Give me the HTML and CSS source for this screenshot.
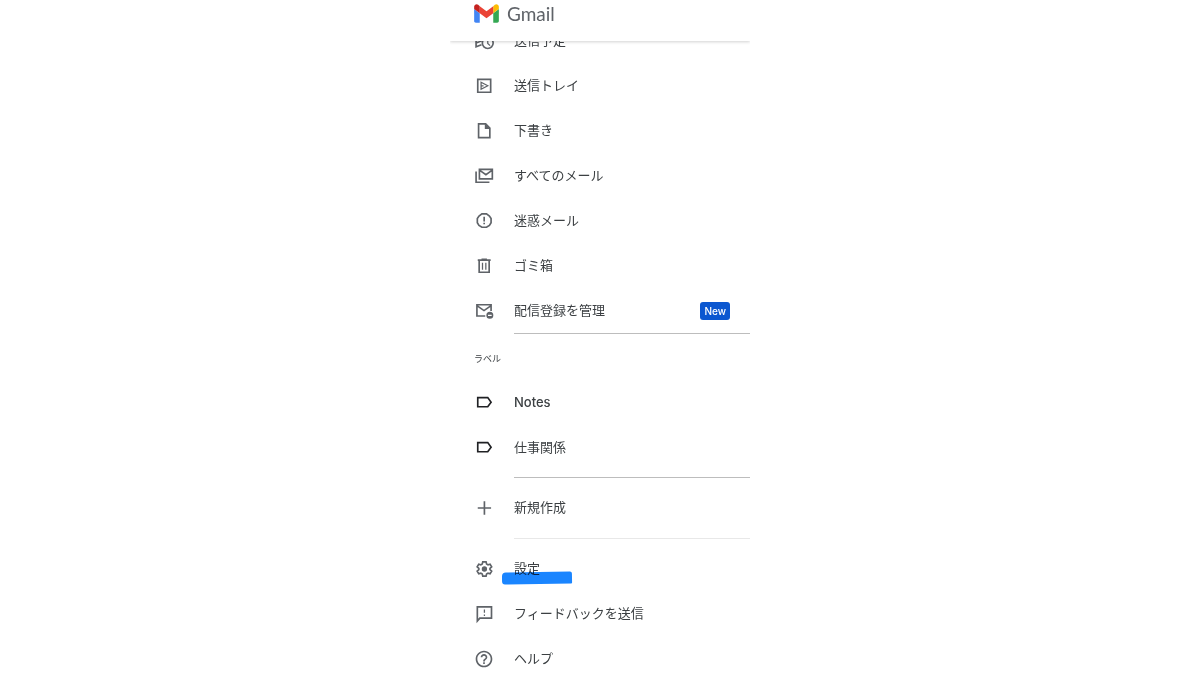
FILE: index.html
```html
<!DOCTYPE html>
<html lang="ja">
<head>
    <meta charset="UTF-8">
    <meta name="viewport" content="width=device-width, initial-scale=1.0">
    <title>Gmail</title>
    <link rel="stylesheet" href="styles.css">
</head>
<body>
    <div class="drawer">
        <header class="header">
            <svg class="logo" viewBox="0 0 52 40">
                <path fill="#4285f4" d="M3.6 39.5h8.2v-20L0 10.7V36c0 2 1.600 3.500 3.600 3.500"/>
                <path fill="#34a853" d="M40.200 39.500h8.200c2 0 3.600-1.600 3.600-3.500V10.700l-11.800 8.800"/>
                <path fill="#fbbc04" d="M40.200 4.500v15L52 10.700V6c0-4.400-5-6.900-8.500-4.200"/>
                <path fill="#ea4335" d="M11.800 19.500v-15L26 15.100 40.200 4.500v15L26 30.200"/>
                <path fill="#c5221f" d="M0 6v4.700l11.800 8.800v-15L8.500 1.800C5-.9 0 1.600 0 6"/>
            </svg>
            <span class="brand">Gmail</span>
        </header>

        <nav class="menu">
            <a class="item" href="#">
                <svg class="icon" viewBox="0 0 24 24"><g class="line"><path d="M9 16.500L2.500 19V4l15 6M2.500 9.500l6 2.500-6 2.500"/><circle cx="16.500" cy="14.500" r="6.500"/><path class="thin" d="M16.500 10.500V15l2.800 2.600"/></g></svg>
                <span class="text">送信予定</span>
            </a>
            <a class="item" href="#">
                <svg class="icon" viewBox="0 0 24 24"><g class="line"><path d="M4.500 4h15.500v15.500H4.500z"/><path class="thin" d="M8.500 7.500l8 4.200-8 4.200zM8.500 11.700h3"/></g></svg>
                <span class="text">送信トレイ</span>
            </a>
            <a class="item" href="#">
                <svg class="icon" viewBox="0 0 24 24"><g class="line"><path d="M5.500 3.500h8.500l5 5v11.500H5.500z"/></g><path d="M13 3v6.500h6.500z"/></svg>
                <span class="text">下書き</span>
            </a>
            <a class="item" href="#">
                <svg class="icon" viewBox="0 0 24 24"><g class="line"><path d="M6.500 4h15.500v11.500H6.500zM6.500 5l7.800 5.500 7.700-5.500M2.500 6.500v13H18.500"/></g></svg>
                <span class="text">すべてのメール</span>
            </a>
            <a class="item" href="#">
                <svg class="icon" viewBox="0 0 24 24"><g class="line"><path d="M9.500 3.500h5.500L18.500 6l2 3v5l-2 3.200-3.500 2.300H9.500L6 17.200 4 14V9l2-3zM12.200 7v5.500M12.200 14v2"/></g></svg>
                <span class="text">迷惑メール</span>
            </a>
            <a class="item" href="#">
                <svg class="icon" viewBox="0 0 24 24"><g class="line"><path d="M4.500 5h15.500M9 4h6.500M6.200 5v14.500h12V5"/><path class="thin" d="M10.200 8v8.500M14.200 8v8.500"/></g></svg>
                <span class="text">ゴミ箱</span>
            </a>
            <a class="item" href="#">
                <svg class="icon" viewBox="0 0 24 24"><g class="line"><path d="M13.500 18h-10V4.500H20.500V12M3.500 5.500l8.500 6 8.500-6"/></g><path fill-rule="evenodd" d="M19 13a4.200 4.200 0 1 0 0 8.400 4.200 4.200 0 0 0 0-8.400M16.800 16.500h4.400V18h-4.400z"/></svg>
                <span class="text">配信登録を管理</span>
                <span class="badge">New</span>
            </a>
            <hr class="divider">

            <h2 class="heading">ラベル</h2>
            <a class="item label" href="#">
                <svg class="icon" viewBox="0 0 24 24"><g class="line"><path d="M4.500 5.500h12l4 5.500-4 5.500h-12z"/></g></svg>
                <span class="text strong">Notes</span>
            </a>
            <a class="item label" href="#">
                <svg class="icon" viewBox="0 0 24 24"><g class="line"><path d="M4.500 5.500h12l4 5.500-4 5.500h-12z"/></g></svg>
                <span class="text">仕事関係</span>
            </a>
            <hr class="divider spaced">

            <a class="item" href="#">
                <svg class="icon" viewBox="0 0 24 24"><g class="line"><path d="M12.500 4v16M4.500 12h16"/></g></svg>
                <span class="text">新規作成</span>
            </a>
            <hr class="divider spaced light">

            <a class="item" href="#">
                <svg class="icon" viewBox="0 0 24 24"><g class="line"><path d="M10.500 3.500h4l.6 2.600 1.700 1 2.500-.8 1.900 3.200-2 1.800v1.400l2 1.800-1.900 3.200-2.500-.8-1.700 1-.6 2.600h-4l-.6-2.600-1.700-1-2.500.8-1.900-3.200 2-1.800v-1.400l-2-1.800 1.900-3.200 2.500.8 1.700-1z"/></g><circle cx="12.500" cy="12" r="3.200"/></svg>
                <span class="text marked">設定</span>
            </a>
            <a class="item" href="#">
                <svg class="icon" viewBox="0 0 24 24"><g class="line"><path d="M4 20.500v-17h17v13.500H7z"/><path class="thin" d="M12.500 6.500v4M12.500 12.500v2"/></g></svg>
                <span class="text">フィードバックを送信</span>
            </a>
            <a class="item" href="#">
                <svg class="icon" viewBox="0 0 24 24"><path d="M11 18h2v-2h-2zm1-16C6.480 2 2 6.480 2 12s4.480 10 10 10 10-4.480 10-10S17.520 2 12 2m0 18c-4.410 0-8-3.590-8-8s3.590-8 8-8 8 3.590 8 8-3.590 8-8 8m0-14c-2.210 0-4 1.790-4 4h2c0-1.100.9-2 2-2s2 .9 2 2c0 2-3 1.750-3 5h2c0-2.250 3-2.500 3-5 0-2.210-1.790-4-4-4"/></svg>
                <span class="text">ヘルプ</span>
            </a>
        </nav>
    </div>
</body>
</html>
```

FILE: styles.css
```css
body {
    margin: 0;
    background-color: #fff;
    color: #3c4043;
    font-family: Inter, "Noto Sans CJK JP", sans-serif;
    font-size: 13px;
}
.drawer {
    max-width: 300px;
    height: 100vh;
    margin: 0 auto;
    overflow: hidden;
}
/* the list is scrolled a little way under the header */
.header {
    position: relative;
    z-index: 1;
    display: flex;
    align-items: center;
    gap: 8px;
    box-sizing: border-box;
    height: 41px;
    padding: 0 24px 14px;
    background-color: #fff;
    box-shadow: 0 1px 3px rgba(0, 0, 0, 0.18);
}
.logo {
    width: 25px;
    height: 19px;
}
.brand {
    color: #5f6368;
    font-family: Lato, sans-serif;
    font-size: 19px;
}
.menu {
    margin-top: -23px;
}
.item {
    display: flex;
    align-items: center;
    gap: 20px;
    height: 45px;
    padding: 0 20px 0 24px;
    color: inherit;
    text-decoration: none;
}
.icon {
    flex: none;
    width: 20px;
    height: 20px;
    fill: #5f6368;
}
.line {
    fill: none;
    stroke: #5f6368;
    stroke-width: 2;
}
.thin {
    stroke-width: 1.5;
}
.text {
    padding-bottom: 3px;
}
.strong {
    padding-bottom: 1px;
    font-weight: 500;
}
.label .line {
    stroke: #202124;
}
.badge {
    margin-left: auto;
    padding: 0 4px;
    border-radius: 3px;
    background-color: #0b57d0;
    color: #fff;
    font-size: 10px;
    font-weight: 500;
    line-height: 18px;
}
.divider {
    height: 1px;
    margin: 0 0 0 64px;
    border: 0;
    background-color: #bdbdbd;
}
.spaced {
    margin-top: 7px;
    margin-bottom: 7px;
}
.light {
    margin-top: 8px;
    background-color: #e8e8e8;
}
.heading {
    margin: 0;
    padding: 17px 24px 13px;
    font-size: 9px;
    font-weight: 400;
    line-height: 16px;
}
.marked {
    position: relative;
}
/* marker stroke over the settings entry */
.marked::after {
    content: "";
    position: absolute;
    top: 14px;
    left: -12px;
    width: 70px;
    height: 12px;
    border-radius: 4px 2px 1px 3px;
    background-color: #1a85ff;
    mix-blend-mode: multiply;
    transform: rotate(-1deg);
}
```
